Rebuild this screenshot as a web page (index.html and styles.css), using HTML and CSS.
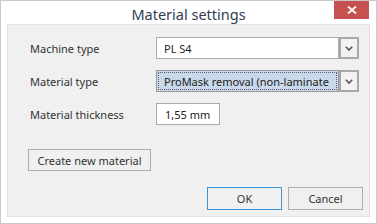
FILE: index.html
```html
<!DOCTYPE html>
<html>
<head>
<meta charset="utf-8">
<link rel="stylesheet" href="styles.css">
</head>
<body>
<div class="window">
  <div class="titlebar">
    <span class="title">Material settings</span>
    <div class="close"><svg width="10" height="8" viewBox="0 0 10 8"><path d="M1 0.5 L9 7.5 M9 0.5 L1 7.5" stroke="#fff" stroke-width="1.8" fill="none"/></svg></div>
  </div>
  <div class="panel">
    <div class="form">
      <div class="label">Machine type</div>
      <div class="combo">
        <div class="combo-text">PL S4</div>
        <div class="combo-btn"><svg width="8" height="5" viewBox="0 0 8 5"><path d="M0.8 0.8 L4 4 L7.2 0.8" stroke="#555" stroke-width="1.6" fill="none"/></svg></div>
      </div>
      <div class="label">Material type</div>
      <div class="combo">
        <div class="combo-text selected"><span class="focus">ProMask removal (non-laminate</span></div>
        <div class="combo-btn"><svg width="8" height="5" viewBox="0 0 8 5"><path d="M0.8 0.8 L4 4 L7.2 0.8" stroke="#555" stroke-width="1.6" fill="none"/></svg></div>
      </div>
      <div class="label">Material thickness</div>
      <div class="textbox">1,55 mm</div>
    </div>
    <div class="create-row">
      <button class="btn create">Create new material</button>
    </div>
    <div class="actions">
      <button class="btn ok">OK</button>
      <button class="btn">Cancel</button>
    </div>
  </div>
</div>
</body>
</html>
```

FILE: styles.css
```css
* { box-sizing: border-box; }
html, body { margin: 0; padding: 0; }
body {
  width: 377px;
  height: 224px;
  overflow: hidden;
  font-family: "Noto Sans", "Open Sans", sans-serif;
  font-size: 11px;
  color: #333;
}
.window {
  width: 377px;
  height: 224px;
  border: 1px solid #c9c9c9;
  background: #fff;
  display: flex;
  flex-direction: column;
}
.titlebar {
  height: 23px;
  position: relative;
  display: flex;
  align-items: center;
  justify-content: center;
}
.title {
  font-size: 14.5px;
  color: #2f3d52;
  margin-top: 3px;
  margin-left: 0;
}
.close {
  position: absolute;
  top: 0;
  left: 333px;
  width: 35px;
  height: 18px;
  background: #c75050;
  display: flex;
  align-items: center;
  justify-content: center;
}
.panel {
  flex: 1;
  margin: 0 6px 6px 6px;
  background: #f0f0f0;
  border: 1px solid #e2e2e2;
  display: flex;
  flex-direction: column;
  padding: 12px 6px 6px 21px;
}
.form {
  display: grid;
  grid-template-columns: 127px auto;
  grid-template-rows: 22px 22px 22px;
  row-gap: 11px;
  align-items: center;
}
.label {
  padding-left: 1px;
}
.combo {
  display: flex;
  width: 203px;
  height: 22px;
}
.combo-text {
  flex: 1;
  background: #fff;
  border: 1px solid #acacac;
  padding: 0 0 0 7px;
  display: flex;
  align-items: center;
  white-space: nowrap;
  overflow: hidden;
  color: #222;
}
.combo-text.selected {
  background: #c9d9e9;
  padding: 1px;
  border-color: #9a9a9a;
}
.focus {
  display: flex;
  align-items: center;
  height: 100%;
  width: 100%;
  border: 1px dotted #5a6170;
  padding-left: 5px;
  overflow: hidden;
}
.combo-btn {
  width: 20px;
  height: 22px;
  border: 2px solid #a8a8a8;
  background: #f2f2f2;
  display: flex;
  align-items: center;
  justify-content: center;
}
.textbox {
  width: 64px;
  height: 22px;
  background: #fff;
  border: 1px solid #acacac;
  display: flex;
  align-items: center;
  padding-left: 8px;
  color: #222;
}
.create-row {
  margin-top: 24px;
  display: flex;
}
.btn {
  font-family: inherit;
  font-size: 11px;
  color: #333;
  background: #f0f0f0;
  border: 1px solid #adadad;
  height: 22px;
  padding: 0;
  margin: 0;
}
.create {
  width: 123px;
  margin-left: -1px;
}
.actions {
  margin-top: auto;
  display: flex;
  justify-content: flex-end;
  gap: 6px;
}
.actions .btn {
  width: 75px;
  height: 23px;
}
.btn.ok {
  border-color: #3a95d6;
}
```
